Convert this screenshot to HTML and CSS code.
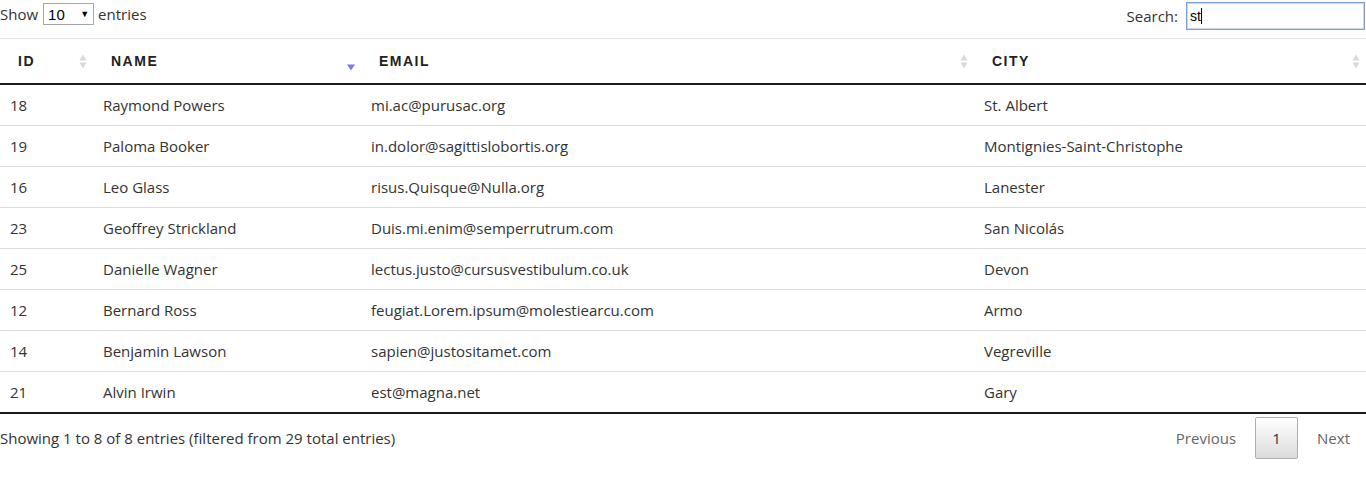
FILE: index.html
```html
<!DOCTYPE html>
<html>
<head>
<meta charset="utf-8">
<link rel="stylesheet" href="styles.css">
</head>
<body>
<div class="wrapper">
  <div class="top">
    <label class="length">Show
      <span class="select"><span class="select-val">10</span><span class="select-arrow">▼</span></span>
      entries</label>
    <label class="search">Search: <span class="input">st<span class="caret"></span></span></label>
  </div>
  <table class="grid">
    <colgroup>
      <col class="c-id"><col class="c-name"><col class="c-email"><col class="c-city">
    </colgroup>
    <thead>
      <tr>
        <th><div class="th-in"><span>ID</span><svg class="sort" viewBox="0 0 8 15"><path d="M4 0.5 L7.5 6.5 H0.5 Z M0.5 8.5 H7.5 L4 14.5 Z" fill="#d9d9d9"/></svg></div></th>
        <th><div class="th-in"><span>NAME</span><svg class="sort" viewBox="0 0 8 15"><path d="M0 8.5 H8 L4 14.5 Z" fill="#7b7be6"/></svg></div></th>
        <th><div class="th-in"><span>EMAIL</span><svg class="sort" viewBox="0 0 8 15"><path d="M4 0.5 L7.5 6.5 H0.5 Z M0.5 8.5 H7.5 L4 14.5 Z" fill="#d9d9d9"/></svg></div></th>
        <th><div class="th-in"><span>CITY</span><svg class="sort" viewBox="0 0 8 15"><path d="M4 0.5 L7.5 6.5 H0.5 Z M0.5 8.5 H7.5 L4 14.5 Z" fill="#d9d9d9"/></svg></div></th>
      </tr>
    </thead>
    <tbody>
      <tr><td>18</td><td>Raymond Powers</td><td>mi.ac@purusac.org</td><td>St. Albert</td></tr>
      <tr><td>19</td><td>Paloma Booker</td><td>in.dolor@sagittislobortis.org</td><td>Montignies-Saint-Christophe</td></tr>
      <tr><td>16</td><td>Leo Glass</td><td>risus.Quisque@Nulla.org</td><td>Lanester</td></tr>
      <tr><td>23</td><td>Geoffrey Strickland</td><td>Duis.mi.enim@semperrutrum.com</td><td>San Nicolás</td></tr>
      <tr><td>25</td><td>Danielle Wagner</td><td>lectus.justo@cursusvestibulum.co.uk</td><td>Devon</td></tr>
      <tr><td>12</td><td>Bernard Ross</td><td>feugiat.Lorem.ipsum@molestiearcu.com</td><td>Armo</td></tr>
      <tr><td>14</td><td>Benjamin Lawson</td><td>sapien@justositamet.com</td><td>Vegreville</td></tr>
      <tr><td>21</td><td>Alvin Irwin</td><td>est@magna.net</td><td>Gary</td></tr>
    </tbody>
  </table>
  <div class="bottom">
    <div class="info">Showing 1 to 8 of 8 entries (filtered from 29 total entries)</div>
    <div class="paging">
      <span class="pbtn disabled">Previous</span>
      <span class="pbtn current">1</span>
      <span class="pbtn disabled">Next</span>
    </div>
  </div>
</div>
</body>
</html>
```
FILE: styles.css
```css
html, body {
  margin: 0;
  padding: 0;
  background: #fff;
}
body {
  font-family: "Open Sans", "Noto Sans", sans-serif;
  font-size: 15px;
  color: #333;
}
.wrapper {
  width: 1366px;
}
.top {
  display: flex;
  justify-content: space-between;
  align-items: flex-start;
  height: 38px;
}
.length {
  display: flex;
  align-items: center;
  gap: 4px;
  margin-top: 3px;
  height: 22px;
  color: #333;
}
.select {
  display: inline-flex;
  align-items: center;
  justify-content: space-between;
  box-sizing: border-box;
  width: 51px;
  height: 22px;
  margin-left: 1px;
  border: 1px solid #a6a6a6;
  padding: 0 4px 0 4px;
  font-family: "Liberation Sans", Arial, sans-serif;
  font-size: 15px;
  color: #000;
  background: #fff;
}
.select-arrow {
  font-size: 9px;
}
.search {
  display: flex;
  align-items: center;
  gap: 8px;
  margin-top: 2px;
  margin-right: 1px;
  color: #333;
}
.input {
  display: inline-flex;
  align-items: center;
  box-sizing: border-box;
  width: 179px;
  height: 28px;
  border: 1px solid #7da2ce;
  box-shadow: inset 0 0 0 1px #c5d7ef;
  padding-left: 3px;
  font-family: "Liberation Sans", Arial, sans-serif;
  font-size: 14px;
  color: #000;
}
.caret {
  display: inline-block;
  width: 1px;
  height: 16px;
  background: #000;
  margin-left: 0;
}
.grid {
  width: 1366px;
  border-collapse: collapse;
  table-layout: fixed;
  border-top: 1px solid #e2e2ea;
}
.c-id { width: 93px; }
.c-name { width: 268px; }
.c-email { width: 613px; }
.c-city { width: 392px; }
.grid th {
  height: 44px;
  padding: 0 6px 0 18px;
  border-bottom: 2px solid #1a1a1a;
  text-align: left;
  font-family: "Liberation Sans", Arial, sans-serif;
  font-weight: bold;
  font-size: 14px;
  letter-spacing: 1.5px;
  color: #222;
}
.th-in {
  display: flex;
  justify-content: space-between;
  align-items: center;
}
.sort {
  width: 8px;
  height: 15px;
  flex: none;
}
.grid th:nth-child(2) .sort {
  margin-top: 4px;
}
.grid td {
  height: 40px;
  padding: 0 10px;
  border-bottom: 1px solid #ddd;
  white-space: nowrap;
  color: #333;
}
.grid tbody tr:last-child td {
  border-bottom: 2px solid #1a1a1a;
}
.bottom {
  display: flex;
  justify-content: space-between;
  align-items: center;
  padding-top: 3px;
}
.info {
  color: #333;
}
.paging {
  display: flex;
  align-items: center;
  gap: 3px;
}
.pbtn {
  display: inline-flex;
  align-items: center;
  justify-content: center;
  box-sizing: border-box;
  height: 42px;
  padding: 0 16px;
  color: #666;
}
.pbtn.current {
  width: 43px;
  padding: 0;
  border: 1px solid #b0b0b0;
  border-radius: 2px;
  color: #333;
  background: linear-gradient(to bottom, #fff 0%, #dcdcdc 100%);
}
```
